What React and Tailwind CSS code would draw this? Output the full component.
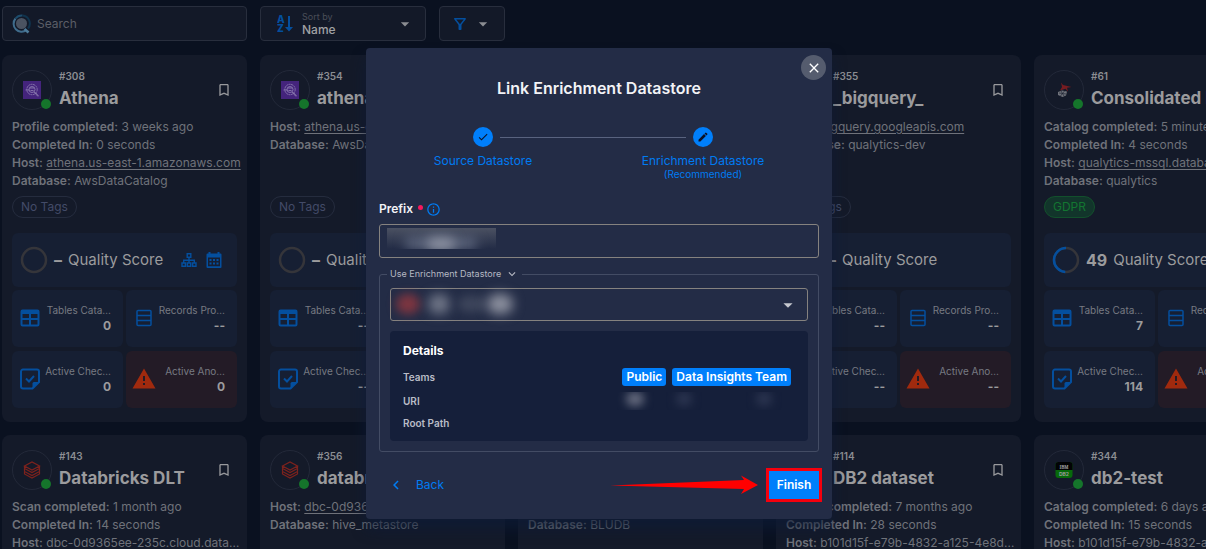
import React, { useState } from "react";
import {
	MdArrowDropDown,
	MdBookmarkBorder,
	MdCheck,
	MdChevronLeft,
	MdClose,
	MdEdit,
	MdExpandMore,
	MdInfoOutline,
	MdOutlineFilterAlt,
} from "react-icons/md";

const datastores = [
	{
		id: 308,
		name: "Athena",
		logo: "athena",
		operation: "Profile",
		when: "3 weeks ago",
		duration: "0 seconds",
		host: "athena.us-east-1.amazonaws.com",
		database: "AwsDataCatalog",
		actions: true,
		tables: "0",
		checks: "0",
		anomalies: "0",
	},
	{ id: 354, name: "athena_test", logo: "athena", host: "athena.us-east-1.amazonaws.com", database: "AwsDataCatalog" },
	{ id: 340, name: "aurora", logo: "athena", host: "aurora.us-east-1.amazonaws.com", database: "aurora" },
	{ id: 355, name: "_bigquery_", logo: "databricks", host: "bigquery.googleapis.com", database: "qualytics-dev" },
	{
		id: 61,
		name: "Consolidated Balance",
		logo: "mssql",
		operation: "Catalog",
		when: "5 minutes ago",
		duration: "4 seconds",
		host: "qualytics-mssql.database.windows.net",
		database: "qualytics",
		tag: "GDPR",
		score: 49,
		tables: "7",
		checks: "114",
	},
	{
		id: 143,
		name: "Databricks DLT",
		logo: "databricks",
		operation: "Scan",
		when: "1 month ago",
		duration: "14 seconds",
		host: "dbc-0d9365ee-235c.cloud.databricks.com",
		database: "hive_metastore",
	},
	{ id: 356, name: "databricks_test", logo: "databricks", host: "dbc-0d9365ee-235c.cloud.databricks.com", database: "hive_metastore" },
	{ id: 361, name: "db2", logo: "db2", host: "b101d15f-e79b-4832-a125-4e8d4.databases.com", database: "BLUDB" },
	{
		id: 114,
		name: "DB2 dataset",
		logo: "db2",
		operation: "Profile",
		when: "7 months ago",
		duration: "28 seconds",
		host: "b101d15f-e79b-4832-a125-4e8d4.databases.com",
		database: "BLUDB",
	},
	{
		id: 344,
		name: "db2-test",
		logo: "db2",
		operation: "Catalog",
		when: "6 days ago",
		duration: "15 seconds",
		host: "b101d15f-e79b-4832-a125-4e8d4.databases.com",
		database: "BLUDB",
	},
];

const SearchLogo = () => (
	<svg viewBox="0 0 20 20" className="h-5 w-5 shrink-0" fill="none">
		<circle cx="9.500" cy="9.500" r="5.500" fill="#4b5361" />
		<path d="M3.500 4.500a8 8 0 0 0 11 11.500" stroke="#3f6c8c" strokeWidth="2" />
		<path d="M3.500 4.500a8 8 0 0 1 7-3" stroke="#1d4c6c" strokeWidth="2" />
		<path d="M10.500 1.500a8 8 0 0 1 5.500 13" stroke="#10334d" strokeWidth="2" />
		<path d="M12.500 15l4 3.500" stroke="#4c7a99" strokeWidth="2.600" />
	</svg>
);

const SortIcon = () => (
	<svg viewBox="0 0 16 18" className="h-[18px] w-4 shrink-0 font-extrabold" fill="#044f9e">
		<text x="0" y="8" fontSize="10">A</text>
		<text x="0" y="17" fontSize="10">Z</text>
		<path d="M11 1h2v11h3l-4 4.500L8 12h3z" />
	</svg>
);

const SitemapIcon = () => (
	<svg viewBox="0 0 16 16" className="h-4 w-4" fill="none" stroke="#044f9e" strokeWidth="1.400">
		<path d="M6.200 1.700h3.600v3.600H6.200zM1 11h3.400v3.300H1zM6.300 11h3.400v3.300H6.300zM11.600 11H15v3.300h-3.400zM8 5.300V11M2.700 11V8.200h10.600V11" />
	</svg>
);

const CalendarIcon = () => (
	<svg viewBox="0 0 16 16" className="h-4 w-4" fill="#044f9e">
		<path
			fillRule="evenodd"
			d="M2.500 0h2v1.500h7V0h2v1.500h1a1 1 0 0 1 1 1V15a1 1 0 0 1-1 1h-13a1 1 0 0 1-1-1V2.500a1 1 0 0 1 1-1h1zM2 5.500v8.700h12V5.500z"
		/>
		<path d="M3.500 7h2v2h-2zM7 7h2v2H7zM10.500 7h2v2h-2zM3.500 10.500h2v2h-2zM7 10.500h2v2H7zM10.500 10.500h2v2h-2z" />
	</svg>
);

const TableIcon = () => (
	<svg viewBox="0 0 24 24" className="h-6 w-6" fill="#044f9e">
		<path
			fillRule="evenodd"
			d="M4.500 3.500h15a2 2 0 0 1 2 2v13a2 2 0 0 1-2 2h-15a2 2 0 0 1-2-2v-13a2 2 0 0 1 2-2M4.500 8v4H11V8zM13 8v4h6.500V8zM4.500 14v4.500H11V14zM13 14v4.500h6.500V14z"
		/>
	</svg>
);

const RecordsIcon = () => (
	<svg viewBox="0 0 24 24" className="h-6 w-6" fill="none" stroke="#044f9e" strokeWidth="1.500">
		<rect x="5" y="4.500" width="14" height="15" rx="1" />
		<path d="M5 9.500h14M5 14.500h14" />
	</svg>
);

const ChecksIcon = () => (
	<svg viewBox="0 0 24 24" className="h-6 w-6" fill="none" stroke="#044f9e" strokeWidth="2">
		<path d="M5 2.500h14a2 2 0 0 1 2 2V15l-6.500 6.500H5a2 2 0 0 1-2-2v-15a2 2 0 0 1 2-2z" />
		<path d="M21 15h-5a1.500 1.500 0 0 0-1.500 1.500v5z" fill="#044f9e" stroke="none" />
		<path d="M8 11.500l3 3 5-5.500" />
	</svg>
);

const AnomalyIcon = () => (
	<svg viewBox="0 0 24 24" className="h-6 w-6" fill="#a02a0e">
		<path fillRule="evenodd" d="M13 14h-2V9h2zM13 18h-2v-2h2zM.500 21.500h23L12 1.500z" />
	</svg>
);

const Logo = ({ kind }) => {
	if (kind === "athena") {
		return (
			<svg viewBox="0 0 18 18" className="h-[18px] w-[18px]" fill="none" stroke="#9385b5" strokeWidth=".8">
				<rect width="18" height="18" fill="#44247c" stroke="none" />
				<circle cx="9" cy="8.500" r="5.200" strokeDasharray="2 .5" />
				<circle cx="9" cy="8.500" r="3" />
				<path d="M2.500 9h4M7 7h4M7.500 9.500h3M11 11l4 4.500M12.500 11.500l3 3.500" />
			</svg>
		);
	}
	if (kind === "databricks") {
		return (
			<svg viewBox="0 0 18 18" className="h-[18px] w-[18px]" fill="none" stroke="#7d221d" strokeWidth="1.200">
				<path d="M1.500 5L9 1l7.500 4L9 9zM1.500 5v2.500l7.500 4 7.500-4V5M1.500 8v2.500l7.500 4 7.500-4V8M1.500 11v2l7.500 4 7.500-4v-2" />
			</svg>
		);
	}
	if (kind === "mssql") {
		return (
			<svg viewBox="0 0 18 18" className="h-[18px] w-[18px]">
				<path d="M6 1.500l2 2.500 8.500 2-4.500.800 1 4-2.500-3L5 9.500l2-3.500z" fill="#761c21" />
				<path d="M3 11l4-1.500 5 1-1 4-3.500 1.500L3 14z" fill="#70737b" />
				<path d="M4 12l7 1M6 10l3 5M9.500 10l-4 5" stroke="#202533" strokeWidth=".7" />
			</svg>
		);
	}
	return (
		<svg viewBox="0 0 18 18" className="h-[18px] w-[18px]" textAnchor="middle">
			<rect x=".500" y="1" width="17" height="16" rx="3" fill="#066a0b" />
			<path d="M.500 9V4a3 3 0 0 1 3-3h11a3 3 0 0 1 3 3v5z" fill="#020304" />
			<text x="9" y="7.500" fontSize="5" fill="#9a9a9a" className="font-serif font-bold">IBM</text>
			<text x="9" y="14.500" fontSize="5" fill="#9a9a9a" className="font-bold">DB2</text>
		</svg>
	);
};

const Tile = ({ icon: Icon, label, value = "--", danger }) => (
	<div
		className={`flex h-[57px] items-center rounded-md pr-3 pb-[2px] pl-[6px] ${
			danger ? "bg-[#231b26]" : "bg-[#161f33]"
		}`}
	>
		<Icon />
		<div className="flex-1 text-right">
			<div className="text-[10px] leading-4 whitespace-nowrap text-[#777a82]">{label}</div>
			<div className="text-xs leading-4 font-bold text-[#9b9b9d]">{value}</div>
		</div>
	</div>
);

const Field = ({ label, children }) => (
	<div className="truncate">
		<span className="font-semibold">{label}:</span> {children}
	</div>
);

const DatastoreCard = ({ store }) => (
	<article className="rounded-lg bg-[#141a29] px-[10px] pt-[15px] pb-[14px]">
		<header className="flex items-center">
			<div className="relative flex h-10 w-10 shrink-0 items-center justify-center rounded-full border border-[#232939]">
				<Logo kind={store.logo} />
				<span className="absolute right-0 bottom-0 h-[10px] w-[10px] rounded-full bg-[#15752b]" />
			</div>
			<div className="ml-[7px] min-w-0 flex-1 whitespace-nowrap">
				<div className="mb-1 text-[10px] leading-3 font-semibold text-[#8b8d92]">#{store.id}</div>
				<h2 className="overflow-hidden text-[17px] leading-6 font-bold text-[#9b9b9d]">{store.name}</h2>
			</div>
			<button aria-label="Bookmark" className="mr-[5px] text-[#98999c]">
				<MdBookmarkBorder className="h-4 w-4" />
			</button>
		</header>
		<div className="-mr-[7px] mt-2 h-[72px] text-xs leading-[18px] text-[#6f727a]">
			{store.operation && (
				<>
					<Field label={`${store.operation} completed`}>{store.when}</Field>
					<Field label="Completed In">{store.duration}</Field>
				</>
			)}
			<Field label="Host">
				<a href="#host" className="underline underline-offset-2">{store.host}</a>
			</Field>
			<Field label="Database">{store.database}</Field>
		</div>
		{store.tag ? (
			<span className="mt-[6px] inline-block rounded-full border border-[#12502c] bg-[#12352b] px-2 text-xs leading-5 text-[#137631]">
				{store.tag}
			</span>
		) : (
			<span className="mt-[6px] inline-block rounded-full border border-[#252c3e] px-2 text-xs leading-5 text-[#434b68]">
				No Tags
			</span>
		)}
		<div className="mt-[15px] flex h-[54px] items-center overflow-hidden rounded-md bg-[#161f33] pr-[15px] pl-2 whitespace-nowrap text-[#9b9b9d]">
			<svg viewBox="0 0 28 28" className="h-7 w-7 shrink-0" fill="none" strokeWidth="2.500">
				<circle cx="14" cy="14" r="12" stroke="#35353a" />
				{store.score && (
					<circle
						cx="14"
						cy="14"
						r="12"
						stroke="#044f9e"
						pathLength="100"
						strokeDasharray={`${store.score} 100`}
						transform="matrix(0 -1 -1 0 28 28)"
					/>
				)}
			</svg>
			<span className="ml-[6px] text-base font-bold">{store.score ?? "–"}</span>
			<span className="ml-[6px] text-[15px]">Quality Score</span>
			{store.actions && (
				<div className="ml-auto flex gap-[9px]">
					<button aria-label="Lineage"><SitemapIcon /></button>
					<button aria-label="Schedule"><CalendarIcon /></button>
				</div>
			)}
		</div>
		<div className="mt-[3px] grid grid-cols-2 gap-x-[3px] gap-y-1">
			<Tile icon={TableIcon} label="Tables Cata…" value={store.tables} />
			<Tile icon={RecordsIcon} label="Records Pro…" />
			<Tile icon={ChecksIcon} label="Active Chec…" value={store.checks} />
			<Tile icon={AnomalyIcon} label="Active Ano…" value={store.anomalies} danger />
		</div>
	</article>
);

const Toolbar = () => (
	<div className="flex gap-[13px]">
		<label className="flex h-[35px] w-[245px] items-center gap-[5px] rounded border border-[#282e3d] bg-[#131928] px-[9px]">
			<SearchLogo />
			<input
				type="search"
				aria-label="Search"
				placeholder="Search"
				className="w-full bg-transparent text-xs text-[#8b8d92] outline-none placeholder:text-[#5b5e67]"
			/>
		</label>
		<div className="flex h-[35px] w-[166px] items-center rounded border border-[#282e3d] bg-[#131928] pr-[10px] pl-4">
			<SortIcon />
			<div className="ml-[9px] flex flex-1 flex-col">
				<label htmlFor="sort" className="text-[9px] leading-3 text-[#4a4e58]">Sort by</label>
				<select id="sort" className="appearance-none text-xs leading-[14px] font-medium text-[#a0a1a4] outline-none">
					<option>Name</option>
				</select>
			</div>
			<MdArrowDropDown className="h-5 w-5 text-[#8b8d92]" />
		</div>
		<button
			aria-label="Filter"
			className="flex h-[35px] w-[66px] items-center gap-1 rounded border border-[#282e3d] bg-[#131928] pl-[11px]"
		>
			<MdOutlineFilterAlt className="h-[18px] w-[18px] text-[#044f9e]" />
			<MdArrowDropDown className="h-5 w-5 text-[#8b8d92]" />
		</button>
	</div>
);

const Step = ({ icon: Icon, label, note, last }) => (
	<li className="flex-1 text-center text-[#007bf2]">
		<div className="flex items-center">
			<span className={`h-px flex-1 ${last ? "bg-[#59637f]" : ""}`} />
			<span className="mx-[7px] flex h-5 w-5 items-center justify-center rounded-full bg-[#007ffb] text-[#0b1226]">
				<Icon className="h-3 w-3" />
			</span>
			<span className={`h-px flex-1 ${last ? "" : "bg-[#59637f]"}`} />
		</div>
		<div className="mt-[6px] text-xs leading-4">{label}</div>
		{note && <div className="text-[10px] leading-[10px]">{note}</div>}
	</li>
);

const LinkDialog = () => {
	const [prefix, setPrefix] = useState("");

	return (
		<section
			role="dialog"
			aria-label="Link Enrichment Datastore"
			className="relative w-[466px] rounded bg-[#232c46] pb-[17px] text-[#f2f3f6] shadow-[0_10px_14px_rgba(13,27,56,0.7)]"
		>
			<button
				aria-label="Close"
				className="absolute top-[7px] right-[6px] flex h-[25px] w-[25px] items-center justify-center rounded-full bg-[#555c6e] text-white"
			>
				<MdClose className="h-4 w-4 stroke-current" />
			</button>
			<h1 className="pt-7 text-center text-base leading-6 font-semibold">Link Enrichment Datastore</h1>
			<ol className="mt-[27px] flex h-[52px] pr-[19px] pl-[7px]">
				<Step icon={MdCheck} label="Source Datastore" />
				<Step icon={MdEdit} label="Enrichment Datastore" note="(Recommended)" last />
			</ol>

			<div className="mt-[22px] px-[13px]">
				<div className="flex h-4 items-center">
					<label htmlFor="prefix" className="text-xs font-semibold">Prefix</label>
					<span className="mb-1 ml-[5px] h-[5px] w-[5px] rounded-full bg-[#f5195d]" />
					<MdInfoOutline className="ml-[3px] h-[15px] w-[15px] text-[#007bf2]" />
				</div>
				<div className="relative mt-[7px]">
					<input
						id="prefix"
						value={prefix}
						onChange={(e) => setPrefix(e.target.value)}
						className="block h-[34px] w-full rounded-[3px] border border-[#85827f] bg-transparent px-2 text-xs outline-none"
					/>
					<span className="pointer-events-none absolute top-1 left-2 h-[21px] w-[109px] overflow-hidden bg-linear-to-b from-[#4b5162] to-[#232c46]">
						<span className="absolute top-[9px] left-[18px] h-3 w-[72px] rounded-full bg-[#5d667d] blur-[6px]" />
						<span className="absolute top-[10px] left-10 h-3 w-7 rounded-full bg-[#9297a6] blur-[6px]" />
					</span>
				</div>

				<fieldset className="mt-2 rounded-[3px] border border-[#434c64] px-[10px] pb-[10px]">
					<legend className="-ml-[3px] flex items-center px-[3px] text-[9px] leading-4 text-[#b6b9c3]">
						Use Enrichment Datastore
						<MdExpandMore className="ml-1 h-[14px] w-[14px]" />
					</legend>
					<div className="relative mt-[6px]">
						<select
							aria-label="Enrichment datastore"
							className="block h-[33px] w-full appearance-none rounded-[3px] border border-[#85827f] px-2 text-xs outline-none"
						>
							<option value="" />
						</select>
						<MdArrowDropDown className="pointer-events-none absolute top-[6px] right-[9px] h-[22px] w-[22px] text-[#c6c8cf]" />
						<span className="pointer-events-none absolute top-[6px] left-[6px] h-5 w-6 rounded-full bg-[#7c3540] blur-[5px]" />
						<span className="pointer-events-none absolute top-[6px] left-[38px] h-5 w-[22px] rounded-full bg-[#727889] blur-[6px]" />
						<span className="pointer-events-none absolute top-2 left-[68px] h-4 w-7 rounded-full bg-[#3d455b] blur-[5px]" />
						<span className="pointer-events-none absolute top-[6px] left-[97px] h-5 w-[26px] rounded-full bg-[#8d919f] blur-[6px]" />
					</div>
					<div className="mt-[10px] h-[110px] rounded bg-[#151f3a] pt-3 pr-[17px] pl-[13px] text-[10px] font-semibold text-[#b9bcc7]">
						<h2 className="text-xs leading-4 font-bold text-white">Details</h2>
						<dl>
							<div className="mt-[9px] flex h-[18px] items-center justify-between">
								<dt>Teams</dt>
								<dd className="flex gap-[6px] text-xs leading-[18px] text-white">
									<span className="rounded-[3px] bg-[#007ffb] px-1">Public</span>
									<span className="rounded-[3px] bg-[#007ffb] px-1">Data Insights Team</span>
								</dd>
							</div>
							<div className="mt-[6px] flex h-[18px] items-center justify-between">
								<dt>URI</dt>
								<dd className="flex h-[18px] w-[174px] overflow-hidden">
									<span className="ml-[9px] h-[14px] w-[18px] rounded-full bg-[#686d80] blur-[5px]" />
									<span className="ml-8 h-[14px] w-4 rounded-full bg-[#2c3550] blur-[5px]" />
									<span className="ml-16 h-[14px] w-4 rounded-full bg-[#2c3550] blur-[5px]" />
								</dd>
							</div>
							<div className="mt-1 flex h-[18px] items-center">
								<dt>Root Path</dt>
								<dd />
							</div>
						</dl>
					</div>
				</fieldset>
			</div>

			<footer className="mt-4 flex items-center pr-[10px] pl-[21px]">
				<button className="flex items-center gap-[11px] text-xs text-[#007bf2]">
					<MdChevronLeft className="h-[18px] w-[18px]" />
					Back
				</button>
				<svg viewBox="0 0 148 20" className="ml-auto h-5 w-[148px]" fill="#ff0000">
					<path d="M0 10.500L134 5 131 0.500 148 10 131 19 134 14z" />
				</svg>
				<button className="ml-2 h-[34px] w-14 border-[3px] border-[#f5000d] bg-[#007ffb] text-xs font-semibold text-white">
					Finish
				</button>
			</footer>
		</section>
	);
};

const App = () => (
	<main className="relative h-screen overflow-hidden bg-[#0a1120] pt-[6px] pl-[2px] font-['Inter',sans-serif]">
		<Toolbar />
		<div className="mt-[14px] grid grid-cols-[repeat(5,245px)] gap-[13px]">
			{datastores.map((store) => (
				<DatastoreCard key={store.id} store={store} />
			))}
		</div>
		<div className="absolute inset-0 flex items-start justify-center pt-12 pr-2">
			<LinkDialog />
		</div>
	</main>
);

export default App;
